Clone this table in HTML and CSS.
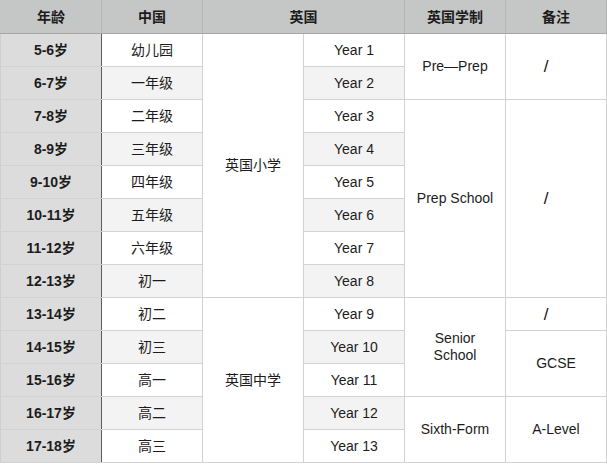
FILE: index.html
```html
<!DOCTYPE html>
<html lang="zh">
<head>
<meta charset="utf-8">
<link rel="stylesheet" href="styles.css">
</head>
<body>
<table class="grid">
  <colgroup>
    <col class="c"><col class="c"><col class="c"><col class="c"><col class="c"><col class="c">
  </colgroup>
  <thead>
    <tr><th>年龄</th><th>中国</th><th colspan="2">英国</th><th>英国学制</th><th>备注</th></tr>
  </thead>
  <tbody>
    <tr><td class="age">5-6岁</td><td>幼儿园</td><td rowspan="8" class="span">英国小学</td><td>Year 1</td><td rowspan="2" class="span">Pre—Prep</td><td rowspan="2" class="span slash">/</td></tr>
    <tr class="alt"><td class="age">6-7岁</td><td>一年级</td><td>Year 2</td></tr>
    <tr><td class="age">7-8岁</td><td>二年级</td><td>Year 3</td><td rowspan="6" class="span">Prep School</td><td rowspan="6" class="span slash">/</td></tr>
    <tr class="alt"><td class="age">8-9岁</td><td>三年级</td><td>Year 4</td></tr>
    <tr><td class="age">9-10岁</td><td>四年级</td><td>Year 5</td></tr>
    <tr class="alt"><td class="age">10-11岁</td><td>五年级</td><td>Year 6</td></tr>
    <tr><td class="age">11-12岁</td><td>六年级</td><td>Year 7</td></tr>
    <tr class="alt"><td class="age">12-13岁</td><td>初一</td><td>Year 8</td></tr>
    <tr><td class="age">13-14岁</td><td>初二</td><td rowspan="5" class="span">英国中学</td><td>Year 9</td><td rowspan="3" class="span">Senior<br>School</td><td class="span slash">/</td></tr>
    <tr class="alt"><td class="age">14-15岁</td><td>初三</td><td>Year 10</td><td rowspan="2" class="span">GCSE</td></tr>
    <tr><td class="age">15-16岁</td><td>高一</td><td>Year 11</td></tr>
    <tr class="alt"><td class="age">16-17岁</td><td>高二</td><td>Year 12</td><td rowspan="2" class="span">Sixth-Form</td><td rowspan="2" class="span">A-Level</td></tr>
    <tr><td class="age">17-18岁</td><td>高三</td><td>Year 13</td></tr>
  </tbody>
</table>
</body>
</html>
```
FILE: styles.css
```css
html, body {
  margin: 0;
  padding: 0;
  background: #ffffff;
}
.grid {
  border-collapse: collapse;
  table-layout: fixed;
  width: 606px;
  font-family: "Liberation Sans", "Noto Sans CJK SC", sans-serif;
  font-size: 14px;
  line-height: 17px;
  color: #1c1c1c;
}
.grid .c {
  width: 101px;
}
.grid th,
.grid td {
  height: 32px;
  padding: 0;
  text-align: center;
  vertical-align: middle;
  border: 1px solid #d2d2d2;
  background: #ffffff;
}
.grid th {
  background: #c5c6c6;
  font-weight: bold;
  border-color: #b4b5b5;
  border-top-color: #c5c6c6;
  border-bottom-color: #a6a7a7;
}
.grid th:first-child {
  border-left-color: #c5c6c6;
}
.grid tr.alt td {
  background: #f3f3f3;
}
.grid td.age,
.grid tr.alt td.age {
  background: #dcdcdc;
  font-weight: bold;
  border-right: 1px solid #5c5c5c;
  border-left-color: #cfcfcf;
}
.grid td.span,
.grid tr.alt td.span {
  background: #ffffff;
}
.grid td.slash {
  padding-right: 20px;
  font-size: 17px;
  color: #111111;
}
```
